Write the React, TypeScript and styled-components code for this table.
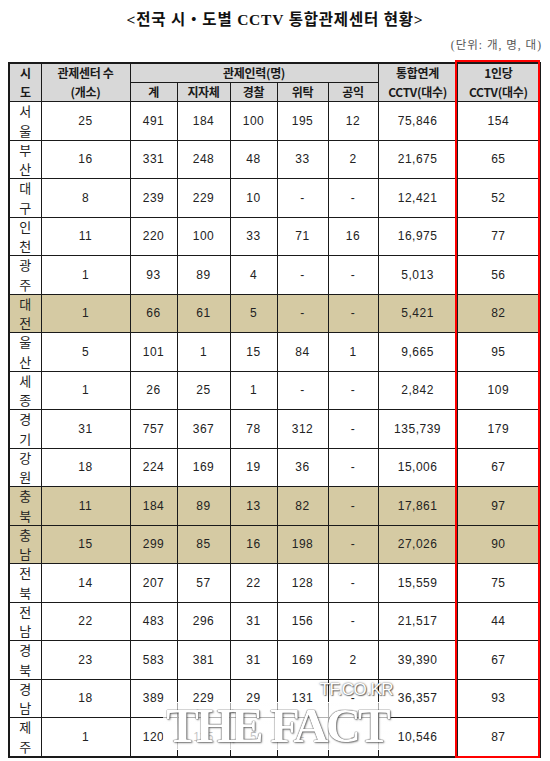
import React, { FC } from 'react'
import styled, { createGlobalStyle } from 'styled-components'

interface IRow {
  sido: [string, string];
  centers: string;
  total: string;
  local: string;
  police: string;
  consign: string;
  service: string;
  cctv: string;
  perPerson: string;
  highlight?: boolean;
}

const rows: IRow[] = [
  { sido: ['서', '울'], centers: '25', total: '491', local: '184', police: '100', consign: '195', service: '12', cctv: '75,846', perPerson: '154' },
  { sido: ['부', '산'], centers: '16', total: '331', local: '248', police: '48', consign: '33', service: '2', cctv: '21,675', perPerson: '65' },
  { sido: ['대', '구'], centers: '8', total: '239', local: '229', police: '10', consign: '-', service: '-', cctv: '12,421', perPerson: '52' },
  { sido: ['인', '천'], centers: '11', total: '220', local: '100', police: '33', consign: '71', service: '16', cctv: '16,975', perPerson: '77' },
  { sido: ['광', '주'], centers: '1', total: '93', local: '89', police: '4', consign: '-', service: '-', cctv: '5,013', perPerson: '56' },
  { sido: ['대', '전'], centers: '1', total: '66', local: '61', police: '5', consign: '-', service: '-', cctv: '5,421', perPerson: '82', highlight: true },
  { sido: ['울', '산'], centers: '5', total: '101', local: '1', police: '15', consign: '84', service: '1', cctv: '9,665', perPerson: '95' },
  { sido: ['세', '종'], centers: '1', total: '26', local: '25', police: '1', consign: '-', service: '-', cctv: '2,842', perPerson: '109' },
  { sido: ['경', '기'], centers: '31', total: '757', local: '367', police: '78', consign: '312', service: '-', cctv: '135,739', perPerson: '179' },
  { sido: ['강', '원'], centers: '18', total: '224', local: '169', police: '19', consign: '36', service: '-', cctv: '15,006', perPerson: '67' },
  { sido: ['충', '북'], centers: '11', total: '184', local: '89', police: '13', consign: '82', service: '-', cctv: '17,861', perPerson: '97', highlight: true },
  { sido: ['충', '남'], centers: '15', total: '299', local: '85', police: '16', consign: '198', service: '-', cctv: '27,026', perPerson: '90', highlight: true },
  { sido: ['전', '북'], centers: '14', total: '207', local: '57', police: '22', consign: '128', service: '-', cctv: '15,559', perPerson: '75' },
  { sido: ['전', '남'], centers: '22', total: '483', local: '296', police: '31', consign: '156', service: '-', cctv: '21,517', perPerson: '44' },
  { sido: ['경', '북'], centers: '23', total: '583', local: '381', police: '31', consign: '169', service: '2', cctv: '39,390', perPerson: '67' },
  { sido: ['경', '남'], centers: '18', total: '389', local: '229', police: '29', consign: '131', service: '-', cctv: '36,357', perPerson: '93' },
  { sido: ['제', '주'], centers: '1', total: '120', local: '115', police: '5', consign: '-', service: '-', cctv: '10,546', perPerson: '87' },
];

const colWidths = [32, 89, 47, 53, 47, 51, 50, 79, 83];

const App: FC = () => {
  return (
    <>
      <GlobalStyle />
      <Page>
        <Title>&lt;전국 시・도별 CCTV 통합관제센터 현황&gt;</Title>
        <Unit>(단위: 개, 명, 대)</Unit>
        <TableWrap>
          <Table>
            <colgroup>
              {colWidths.map((w, i) => <col key={i} style={{ width: w }} />)}
            </colgroup>
            <thead>
              <tr>
                <HeadCell rowSpan={2}>
                  <Stack><span>시</span><span>도</span></Stack>
                </HeadCell>
                <HeadCell rowSpan={2}>
                  <Stack><span>관제센터 수</span><span>(개소)</span></Stack>
                </HeadCell>
                <HeadCell colSpan={5}>관제인력(명)</HeadCell>
                <HeadCell rowSpan={2}>
                  <Stack><span>통합연계</span><span>CCTV(대수)</span></Stack>
                </HeadCell>
                <HeadCell rowSpan={2}>
                  <Stack><span>1인당</span><span>CCTV(대수)</span></Stack>
                </HeadCell>
              </tr>
              <tr>
                <HeadCell>계</HeadCell>
                <HeadCell>지자체</HeadCell>
                <HeadCell>경찰</HeadCell>
                <HeadCell>위탁</HeadCell>
                <HeadCell>공익</HeadCell>
              </tr>
            </thead>
            <tbody>
              {rows.map((r) => (
                <Row key={r.sido.join('')} highlight={!!r.highlight}>
                  <SidoCell>
                    <SidoStack><span>{r.sido[0]}</span><span>{r.sido[1]}</span></SidoStack>
                  </SidoCell>
                  <NumCell>{r.centers}</NumCell>
                  <NumCell>{r.total}</NumCell>
                  <NumCell>{r.local}</NumCell>
                  <NumCell>{r.police}</NumCell>
                  <NumCell>{r.consign}</NumCell>
                  <NumCell>{r.service}</NumCell>
                  <NumCell>{r.cctv}</NumCell>
                  <NumCell>{r.perPerson}</NumCell>
                </Row>
              ))}
            </tbody>
          </Table>
          <RedFrame />
          <Watermark>
            <Site>TF.CO.KR</Site>
            <Brand>THE FACT</Brand>
          </Watermark>
        </TableWrap>
      </Page>
    </>
  );
};

export default App;

const GlobalStyle = createGlobalStyle`
  html, body {
    margin: 0;
    padding: 0;
    background: #ffffff;
  }
`;

const Page = styled.div`
  width: 550px;
  height: 761px;
  overflow: hidden;
  font-family: "Noto Sans CJK KR", "Liberation Sans", sans-serif;
  color: #1e1e1e;
`;

const Title = styled.div`
  padding-top: 9px;
  height: 22px;
  line-height: 22px;
  text-align: center;
  font-size: 15.5px;
  font-weight: 700;
  letter-spacing: 0.8px;
  font-family: "Liberation Serif", "Noto Sans CJK KR", serif;
  color: #111;
`;

const Unit = styled.div`
  margin-top: 5px;
  padding-right: 8px;
  height: 18px;
  line-height: 18px;
  text-align: right;
  font-size: 11.5px;
  letter-spacing: 1px;
  color: #555;
  font-family: "Liberation Serif", "Noto Sans CJK KR", serif;
`;

const TableWrap = styled.div`
  position: relative;
  margin: 8px 0 0 8px;
  width: 532px;
`;

const Table = styled.table`
  width: 532px;
  border-collapse: collapse;
  table-layout: fixed;
  border: 2px solid #1a1a1a;
`;

const HeadCell = styled.th`
  background: #d8d8d8;
  border: 1px solid #1a1a1a;
  height: 18px;
  padding: 0;
  font-size: 12px;
  font-weight: 700;
  line-height: 18px;
  text-align: center;
  color: #1a1a1a;
  white-space: nowrap;
  letter-spacing: -0.3px;
`;

const Stack = styled.div`
  display: flex;
  flex-direction: column;
  align-items: center;
  justify-content: space-between;
  height: 37px;
  line-height: 18px;
`;

const Row = styled.tr<{ highlight: boolean }>`
  height: 38.5px;
  background: ${({ highlight }) => highlight ? '#d5caa3' : '#ffffff'};
`;

const SidoCell = styled.td`
  border: 1px solid #1a1a1a;
  padding: 0;
`;

const SidoStack = styled.div`
  display: flex;
  flex-direction: column;
  align-items: center;
  justify-content: space-between;
  height: 37.5px;
  font-size: 13px;
  line-height: 18px;
  color: #222;
`;

const NumCell = styled.td`
  border: 1px solid #1a1a1a;
  padding: 0;
  text-align: center;
  vertical-align: middle;
  font-family: "Liberation Sans", "Noto Sans CJK KR", sans-serif;
  font-size: 12px;
  letter-spacing: 0.5px;
  color: #222;
`;

const RedFrame = styled.div`
  position: absolute;
  left: 447px;
  top: -2px;
  bottom: 0;
  width: 85px;
  border: 2px solid #ff0000;
  box-sizing: border-box;
  pointer-events: none;
`;

const Watermark = styled.div`
  position: absolute;
  left: 155px;
  top: 618px;
  width: 228px;
  display: flex;
  flex-direction: column;
  align-items: center;
  pointer-events: none;
`;

const Site = styled.div`
  align-self: flex-end;
  margin-right: -2px;
  font-family: "Liberation Sans", sans-serif;
  font-size: 17px;
  line-height: 20px;
  letter-spacing: -0.5px;
  color: #ffffff;
  text-shadow: 0 0 2px rgba(0, 0, 0, 0.7), 1px 1px 1px rgba(0, 0, 0, 0.5);
`;

const Brand = styled.div`
  margin-top: 2px;
  width: 100%;
  text-align: center;
  font-family: "Liberation Serif", serif;
  font-weight: 700;
  font-size: 49px;
  line-height: 46px;
  letter-spacing: -3px;
  color: #ffffff;
  background: linear-gradient(to bottom, rgba(255, 255, 255, 0.6), rgba(255, 255, 255, 0.8));
  border-top: 1px solid rgba(255, 255, 255, 0.9);
  border-bottom: 1px solid rgba(255, 255, 255, 0.9);
  text-shadow: 0 0 1px #444, 0 0 1px #444, 1px 1px 2px rgba(0, 0, 0, 0.5);
`;
